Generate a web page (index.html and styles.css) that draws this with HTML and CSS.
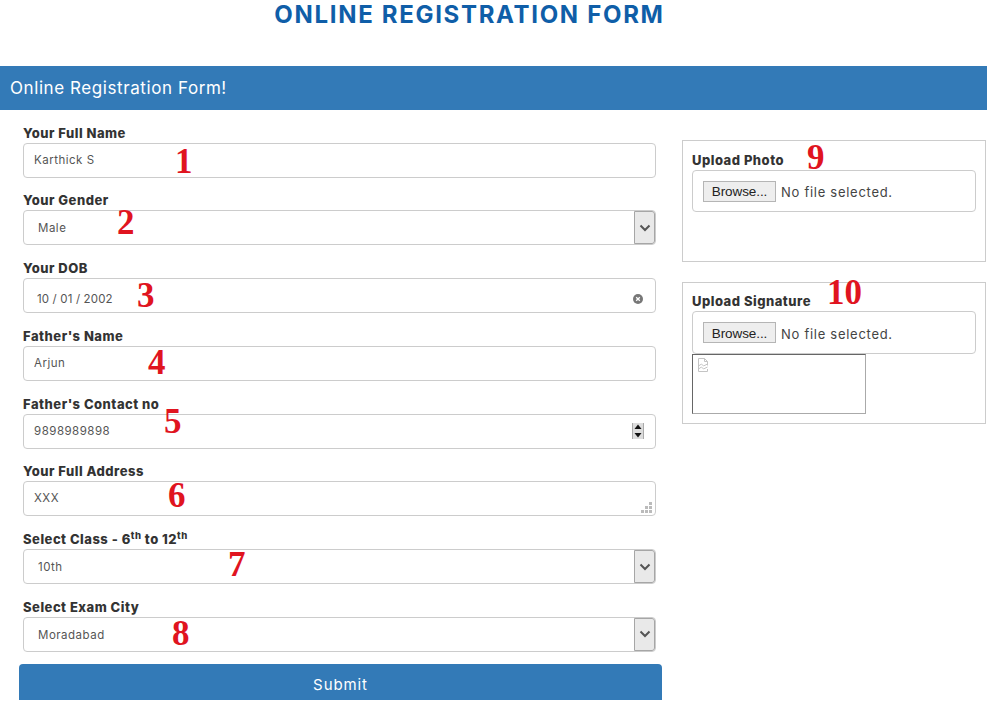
FILE: index.html
```html
<!DOCTYPE html>
<html lang="en">
<head>
<meta charset="utf-8">
<title>Online Registration Form</title>
<link rel="stylesheet" href="styles.css">
</head>
<body>
<div class="page">
  <h1 class="title">ONLINE REGISTRATION FORM</h1>
  <div class="banner">Online Registration Form!</div>
  <form class="content">
    <div class="main-col">
      <div class="row">
        <label class="label">Your Full Name</label>
        <div class="control"><input class="field" value="Karthick S"></div>
      </div>
      <div class="row">
        <label class="label">Your Gender</label>
        <div class="control">
          <select class="field picker"><option>Male</option></select>
          <span class="drop"><svg width="12" height="8" viewBox="0 0 12 8"><path d="M1.5 1.5 6 6l4.5-4.5" fill="none" stroke="#555" stroke-width="2"/></svg></span>
        </div>
      </div>
      <div class="row">
        <label class="label">Your DOB</label>
        <div class="control">
          <input class="field dob" value="10 / 01 / 2002">
          <svg class="clear" width="10" height="10" viewBox="0 0 10 10"><circle cx="5" cy="5" r="5" fill="#777"/><path d="M3.2 3.2l3.6 3.6M6.8 3.2l-3.6 3.6" stroke="#fff" stroke-width="1.3"/></svg>
        </div>
      </div>
      <div class="row">
        <label class="label">Father's Name</label>
        <div class="control"><input class="field" value="Arjun"></div>
      </div>
      <div class="row">
        <label class="label">Father's Contact no</label>
        <div class="control">
          <input class="field" value="9898989898">
          <span class="spin">
            <svg width="10" height="8" viewBox="0 0 10 8"><path d="M5 1.5 8.5 6h-7z" fill="#111"/></svg>
            <svg width="10" height="8" viewBox="0 0 10 8"><path d="M5 6.5 8.5 2h-7z" fill="#111"/></svg>
          </span>
        </div>
      </div>
      <div class="row">
        <label class="label">Your Full Address</label>
        <div class="control">
          <input class="field address" value="XXX">
          <svg class="grip" width="11" height="11" viewBox="0 0 11 11"><path d="M8 0h3v3H8zM4 4h3v3H4zM8 4h3v3H8zM0 8h3v3H0zM4 8h3v3H4zM8 8h3v3H8z" fill="#bbb"/></svg>
        </div>
      </div>
      <div class="row">
        <label class="label">Select Class - 6<sup>th</sup> to 12<sup>th</sup></label>
        <div class="control">
          <select class="field picker"><option>10th</option></select>
          <span class="drop"><svg width="12" height="8" viewBox="0 0 12 8"><path d="M1.5 1.5 6 6l4.5-4.5" fill="none" stroke="#555" stroke-width="2"/></svg></span>
        </div>
      </div>
      <div class="row">
        <label class="label">Select Exam City</label>
        <div class="control">
          <select class="field picker"><option>Moradabad</option></select>
          <span class="drop"><svg width="12" height="8" viewBox="0 0 12 8"><path d="M1.5 1.5 6 6l4.5-4.5" fill="none" stroke="#555" stroke-width="2"/></svg></span>
        </div>
      </div>
      <button type="button" class="submit">Submit</button>
    </div>
    <div class="side-col">
      <div class="upload upload-photo">
        <label class="label">Upload Photo</label>
        <div class="file-box"><button type="button" class="browse">Browse...</button><span class="file-name">No file selected.</span></div>
      </div>
      <div class="upload upload-sign">
        <label class="label">Upload Signature</label>
        <div class="file-box"><button type="button" class="browse">Browse...</button><span class="file-name">No file selected.</span></div>
        <div class="preview">
          <svg width="12" height="14" viewBox="0 0 12 14"><path d="M1.5.5h6l3 3v4M10.5 11v2.5h-9V.5M7.5.5v3h3M1.5 8l3-2 2 2 4-2M1.5 11l3-2 2 2 4-2" fill="none" stroke="#c4c4c4"/></svg>
        </div>
      </div>
    </div>
  </form>
  <span class="mark m1">1</span>
  <span class="mark m2">2</span>
  <span class="mark m3">3</span>
  <span class="mark m4">4</span>
  <span class="mark m5">5</span>
  <span class="mark m6">6</span>
  <span class="mark m7">7</span>
  <span class="mark m8">8</span>
  <span class="mark m9">9</span>
  <span class="mark m10">10</span>
</div>
</body>
</html>
```

FILE: styles.css
```css
* { box-sizing: border-box; }
html, body { margin: 0; padding: 0; background: #fff; }
body { font-family: Inter, "Open Sans", sans-serif; color: #333; overflow: hidden; }
.page { position: relative; width: 987px; height: 706px; overflow: hidden; }
.title {
  margin: 0;
  height: 66px;
  padding: 0 48px 0 0;
  text-align: center;
  font-size: 24px;
  line-height: 29px;
  font-weight: 700;
  letter-spacing: 1.68px;
  color: #0f5ea8;
}
.banner {
  height: 44px;
  background: #337ab7;
  color: #fff;
  font-size: 17px;
  line-height: 44px;
  padding-left: 10px;
  letter-spacing: .58px;
}
.content { display: flex; align-items: flex-start; padding-left: 19px; }
.main-col { width: 643px; padding-top: 14.5px; display: flex; flex-direction: column; }
.row { padding: 0 6px 0 4px; height: 67.75px; display: flex; flex-direction: column; }
.label {
  display: block;
  margin-bottom: 2px;
  font-size: 13px;
  line-height: 16px;
  font-weight: 800;
  letter-spacing: .5px;
  color: #333;
  white-space: nowrap;
}
.label sup { font-size: 9.5px; line-height: 0; }
.control {
  position: relative;
  height: 35px;
  flex: none;
  border: 1px solid #ccc;
  border-radius: 4px;
  display: flex;
  align-items: center;
  background: #fff;
}
.field {
  flex: 1;
  min-width: 0;
  height: 100%;
  border: 0;
  outline: 0;
  background: transparent;
  font-family: inherit;
  font-size: 11.5px;
  color: #555;
  padding: 0 10px;
  letter-spacing: .5px;
}
.picker { appearance: none; -webkit-appearance: none; padding: 1px 0 0 14px; }
.dob { padding: 6px 10px 0 13px; letter-spacing: .15px; }
.address { padding-bottom: 2px; }
.drop {
  position: absolute;
  right: 0;
  top: 0;
  bottom: 0;
  width: 21px;
  display: flex;
  align-items: center;
  justify-content: center;
  background: #e9e9e9;
  border: 1px solid #a6a6a6;
  border-radius: 0 3px 3px 0;
}
.clear { position: absolute; right: 12px; top: 15px; }
.spin {
  position: absolute;
  right: 11px;
  top: 8px;
  width: 12px;
  height: 16px;
  display: flex;
  flex-direction: column;
  background: #ddd;
  border: 1px solid #aaa;
  border-width: 0 1px;
}
.spin svg { display: block; }
.grip { position: absolute; right: 3px; bottom: 2px; }
.submit {
  height: 36px;
  width: 643px;
  margin-top: -2.5px;
  padding: 4px 0 0;
  border: 0;
  border-radius: 4px 4px 0 0;
  background: #337ab7;
  color: #fff;
  font-family: inherit;
  font-size: 15px;
  letter-spacing: .9px;
}
.side-col { margin-left: 20px; padding-top: 30px; width: 304px; display: flex; flex-direction: column; gap: 20px; }
.upload { border: 1px solid #ccc; padding: 10px 9px 9px; }
.upload-photo { height: 122px; padding-top: 11px; }
.upload-sign .file-box { height: 43px; }
.file-box {
  display: flex;
  align-items: center;
  height: 42px;
  border: 1px solid #ccc;
  border-radius: 4px;
  padding: 0 10px;
}
.browse {
  width: 73px;
  height: 21px;
  padding: 1px 0 0;
  background: #eee;
  border: 1px solid #b5b5b5;
  font-family: "Liberation Sans", sans-serif;
  font-size: 13.5px;
  letter-spacing: -.1px;
  color: #222;
}
.file-name { margin-left: 5px; padding-top: 2px; font-size: 13px; letter-spacing: .72px; color: #444; }
.preview {
  width: 174px;
  height: 60px;
  border: 1px solid;
  border-color: #666 #aaa #aaa #666;
  padding: 3px 4px;
}
.preview svg { display: block; }
.mark {
  position: absolute;
  font-family: "Liberation Serif", serif;
  font-weight: 700;
  font-size: 35px;
  line-height: 1;
  color: #e0141f;
}
.m1 { left: 175px; top: 144px; }
.m2 { left: 117px; top: 205px; }
.m3 { left: 137px; top: 278px; }
.m4 { left: 148px; top: 345px; }
.m5 { left: 164px; top: 404px; }
.m6 { left: 168px; top: 478px; }
.m7 { left: 228px; top: 547px; }
.m8 { left: 172px; top: 616px; }
.m9 { left: 807px; top: 140px; }
.m10 { left: 827px; top: 275px; }
```
